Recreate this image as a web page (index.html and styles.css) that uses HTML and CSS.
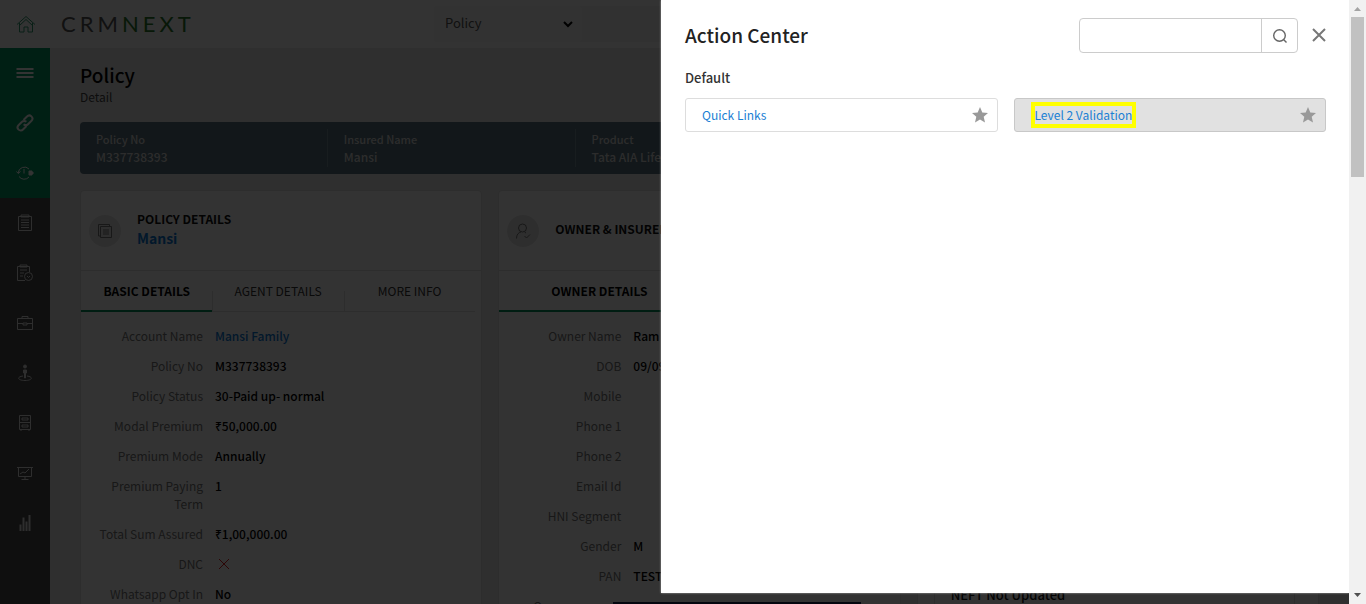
FILE: index.html
```html
<!DOCTYPE html>
<html lang="en">
<head>
<meta charset="utf-8">
<title>Policy Detail</title>
<link rel="stylesheet" href="styles.css">
</head>
<body>
<div class="window">
  <div class="app">
    <header class="topbar">
      <a class="home" href="#" aria-label="Home">
        <svg width="20" height="18" viewBox="0 0 20 18"><path d="M1 9.500 10 1.500l9 8M3.500 8v9h4.500v-5h4v5h4.500V8M3.500 10.500 10 4.500l6.500 6"/></svg>
      </a>
      <div class="logo">CRM<span class="logo-next">NEXT</span></div>
      <div class="search-bar">
        <select class="module" aria-label="Module"><option>Policy</option></select>
        <svg class="chevron" width="10" height="7" viewBox="0 0 10 7"><path d="m1 1 4 4 4-4"/></svg>
      </div>
    </header>
    <div class="body">
      <nav class="sidebar">
        <div class="side-main">
          <a href="#" aria-label="Menu"><svg class="menu-icon" width="18" height="18" viewBox="0 0 18 18"><path d="M.5 5h17M.5 9h17M.5 13h17"/></svg></a>
          <a href="#" aria-label="Links"><svg class="link-icon" width="18" height="18" viewBox="0 0 18 18"><path d="m7.500 6 3.500-3.500a3 3 0 0 1 4.500 4.300L12 10.200a3 3 0 0 1-4.300 0M10.500 12 7 15.500a3 3 0 0 1-4.500-4.300L6 7.800a3 3 0 0 1 4.300 0"/></svg></a>
          <a href="#" aria-label="Recent"><svg width="18" height="18" viewBox="0 0 18 18"><path d="M13 5A6.300 6.300 0 0 0 2.200 9M3 12.500a6.300 6.300 0 0 0 10 .5M.5 7.500 2.200 9.500 4.500 7.500M8 5v4.500"/><path class="solid" d="M13 7h3v4h-3zM16.500 8h.5v2h-.5z"/></svg></a>
        </div>
        <a href="#" aria-label="Tasks"><svg width="18" height="18" viewBox="0 0 18 18"><path d="M2.500 2.500h13v14h-13zM5 1h8v2H5zM5 6h8M5 8.500h8M5 11h8M5 13.500h8"/></svg></a>
        <a href="#" aria-label="Scheduled"><svg width="18" height="18" viewBox="0 0 18 18"><path d="M9 16.500H1.500v-14h12V8M4 1h7v2H4zM4 6h7M4 9h4M4 12h3"/><circle cx="12.500" cy="12.500" r="4"/><path d="m11 12 1.500 1.500L14 12"/></svg></a>
        <a href="#" aria-label="Business"><svg width="18" height="18" viewBox="0 0 18 18"><path d="M1.500 4.500h15v11h-15zM6 4V2.500h6V4M2 9.500h5M11 9.500h5M7 9h4v2H7z"/></svg></a>
        <a href="#" aria-label="Location"><svg width="18" height="18" viewBox="0 0 18 18"><circle class="solid" cx="9" cy="2.500" r="1.500"/><path class="solid" d="M7.500 6h3v3h-1v5h-1V9h-1z"/><path d="M7 12c-7 1-5 4.500 2 4.500s9-3.500 2-4.500"/></svg></a>
        <a href="#" aria-label="Records"><svg width="18" height="18" viewBox="0 0 18 18"><path d="M3.500 1.500h11v14h-11zM4 8.500h10M6 4h6v2H6zM6 11h6v2H6zM5 15.500v1.500M13 15.500v1.500"/></svg></a>
        <a href="#" aria-label="Presentations"><svg width="18" height="18" viewBox="0 0 18 18"><path d="M1 3.500h16M2.500 4v8.500h13V4M4 10l3-2 2 1 4-4M9 13v2M5.500 15.500h7"/></svg></a>
        <a href="#" aria-label="Reports"><svg class="bars-icon" width="18" height="18" viewBox="0 0 18 18"><path d="M4.500 17v-6.500M7.500 17V3.500M10.500 17V7.500M13.500 17V1"/></svg></a>
      </nav>
      <main class="content">
        <h1 class="page-title">Policy</h1>
        <p class="page-sub">Detail</p>
        <section class="summary">
          <div class="fact"><span class="fact-label">Policy No</span><span>M337738393</span></div>
          <div class="fact"><span class="fact-label">Insured Name</span><span>Mansi</span></div>
          <div class="fact"><span class="fact-label">Product</span><span>Tata AIA Life Insurance</span></div>
          <div class="fact"></div>
          <div class="fact"></div>
        </section>
        <div class="cards">
          <section class="card">
            <div class="card-head">
              <span class="badge"><svg width="16" height="16" viewBox="0 0 16 16"><path d="M3.500 13H1.500V1.500h11v2M3.500 3.500h11v11h-11zM6 7h6M6 9h6M6 11h6"/></svg></span>
              <div class="card-names"><h2 class="card-title">POLICY DETAILS</h2><a class="card-link" href="#">Mansi</a></div>
            </div>
            <div class="tabs">
              <button class="tab active">BASIC DETAILS</button>
              <button class="tab">AGENT DETAILS</button>
              <button class="tab">MORE INFO</button>
            </div>
            <dl class="fields">
              <dt>Account Name</dt><dd><a href="#">Mansi Family</a></dd>
              <dt>Policy No</dt><dd>M337738393</dd>
              <dt>Policy Status</dt><dd>30-Paid up- normal</dd>
              <dt>Modal Premium</dt><dd>₹50,000.00</dd>
              <dt>Premium Mode</dt><dd>Annually</dd>
              <dt>Premium Paying Term</dt><dd>1</dd>
              <dt>Total Sum Assured</dt><dd>₹1,00,000.00</dd>
              <dt>DNC</dt><dd><svg class="cross" width="18" height="18" viewBox="0 0 18 18"><path d="m4 4 10 10M14 4 4 14"/></svg></dd>
              <dt>Whatsapp Opt In</dt><dd>No</dd>
            </dl>
          </section>
          <section class="card">
            <div class="card-head">
              <span class="badge"><svg width="16" height="16" viewBox="0 0 16 16"><circle cx="7.500" cy="5" r="4"/><path d="M1.500 15.500c0-4 2-6 4.500-6.500M9.500 9l1.500 1M9.500 13l2 2 3.500-3.500"/></svg></span>
              <div class="card-names"><h2 class="card-title">OWNER &amp; INSURED</h2></div>
            </div>
            <div class="tabs two">
              <button class="tab active">OWNER DETAILS</button>
              <button class="tab">INSURED DETAILS</button>
            </div>
            <dl class="fields">
              <dt>Owner Name</dt><dd>Ram</dd>
              <dt>DOB</dt><dd>09/09/1980</dd>
              <dt>Mobile</dt><dd></dd>
              <dt>Phone 1</dt><dd></dd>
              <dt>Phone 2</dt><dd></dd>
              <dt>Email Id</dt><dd></dd>
              <dt>HNI Segment</dt><dd></dd>
              <dt>Gender</dt><dd>M</dd>
              <dt>PAN</dt><dd>TEST</dd>
              <dt class="group">Owner</dt><dd></dd>
            </dl>
          </section>
          <section class="card alerts">
            <div class="alert">NEFT Not Updated</div>
          </section>
        </div>
      </main>
    </div>
    <div class="overlay"></div>
    <div class="status-strip"></div>
    <aside class="panel">
      <div class="panel-head">
        <h2 class="panel-title">Action Center</h2>
        <form class="finder">
          <input type="text" aria-label="Search actions">
          <button type="button" aria-label="Search"><svg width="16" height="16" viewBox="0 0 16 16"><circle cx="7.500" cy="7.500" r="5.800"/><path d="m11.500 11.500 3 3"/></svg></button>
        </form>
        <button class="close" aria-label="Close"><svg width="14" height="14" viewBox="0 0 14 14"><path d="m1 1 12 12M13 1 1 13"/></svg></button>
      </div>
      <h3 class="group-title">Default</h3>
      <div class="actions">
        <div class="action"><a href="#">Quick Links</a><button class="star" aria-label="Favourite Quick Links"><svg width="16" height="16" viewBox="0 0 16 16"><path d="m8 0 2.300 5.400 5.700.5-4.300 3.800L13 15.500l-5-3-5 3 1.300-5.800L0 5.900l5.700-.5z"/></svg></button></div>
        <div class="action hovered"><a class="marked" href="#">Level 2 Validation</a><button class="star" aria-label="Favourite Level 2 Validation"><svg width="16" height="16" viewBox="0 0 16 16"><path d="m8 0 2.300 5.400 5.700.5-4.300 3.800L13 15.500l-5-3-5 3 1.300-5.800L0 5.900l5.700-.5z"/></svg></button></div>
      </div>
    </aside>
  </div>
  <div class="scrollbar">
    <svg class="arrow-up" width="17" height="17" viewBox="0 0 17 17"><path d="M5 11h7L8.500 7z"/></svg>
    <div class="track"><div class="thumb"></div></div>
    <svg class="arrow-down" width="17" height="17" viewBox="0 0 17 17"><path d="M5 6h7l-3.500 4z"/></svg>
  </div>
</div>
</body>
</html>
```

FILE: styles.css
```css
* { box-sizing: border-box; }
body {
  margin: 0;
  font-family: "Noto Sans CJK SC", "Noto Sans", sans-serif;
  font-size: 12px;
  line-height: 18px;
  color: #111;
}
h1, h2, h3, p, dl, dd { margin: 0; }
a { color: #0a78d6; text-decoration: none; }
button { font: inherit; border: 0; background: none; padding: 0; }
svg { display: block; fill: none; stroke: currentColor; }

.window { display: flex; height: 100vh; overflow: hidden; }
.app { position: relative; flex: 1; min-width: 0; display: flex; flex-direction: column; overflow: hidden; background: #ebebeb; }

.topbar { flex: none; display: flex; align-items: center; height: 48px; background: #fff; }
.home { width: 52px; display: flex; justify-content: center; color: #2f9c70; }
.logo { width: 382px; padding-left: 9px; font-family: Lato, sans-serif; font-size: 22px; line-height: 32px; letter-spacing: 4px; color: #555; }
.logo-next { color: #2b7a2b; }
.search-bar { position: relative; flex: 1; height: 36px; background: #f5f5f5; border-radius: 4px; }
.module { appearance: none; width: 148px; height: 36px; padding: 0 11px 2px; border: 0; border-radius: 4px; background: #f9f9f9; font: inherit; font-size: 13px; color: #555; }
.chevron { position: absolute; left: 129px; top: 15px; color: #000; stroke-width: 2; }

.body { flex: 1; min-height: 0; display: flex; }
.sidebar { flex: none; width: 50px; background: #4b4b4b; }
.side-main { background: #009b66; }
.sidebar a { display: flex; align-items: center; justify-content: center; height: 50px; color: #e4e4e4; }
.side-main a { color: #fff; }
.menu-icon, .link-icon, .bars-icon { stroke-width: 2; }
.solid { fill: currentColor; }

.content { flex: 1; min-width: 0; padding: 13px 30px 0; }
.page-title { font-size: 19px; line-height: 28px; font-weight: 500; color: #000; }
.page-sub { font-size: 12px; line-height: 16px; color: #444; }
.summary { display: grid; grid-template-columns: repeat(5, 1fr); height: 52px; margin-top: 17px; padding: 7px 0; background: #5a7480; border-radius: 4px; }
.fact { display: flex; flex-direction: column; justify-content: center; padding-left: 16px; border-right: 1px solid #7b919b; color: #ddd; font-weight: 500; white-space: nowrap; overflow: hidden; }
.fact:last-child { border-right: 0; }
.fact-label { font-size: 11px; }

.cards { display: grid; grid-template-columns: repeat(3, 1fr); gap: 16px; margin-top: 16px; }
.card { min-width: 0; height: 600px; background: #fff; border: 1px solid #dedede; border-radius: 4px; }
.card-head { display: flex; align-items: center; gap: 16px; height: 80px; padding-left: 8px; border-bottom: 1px solid #dedede; }
.badge { display: flex; align-items: center; justify-content: center; width: 32px; height: 32px; border-radius: 50%; background: #e6e6e6; color: #777; }
.card-names { padding-bottom: 4px; }
.card-title { font-size: 12px; line-height: 18px; font-weight: 700; color: #111; white-space: nowrap; }
.card-link { display: block; font-size: 14px; line-height: 20px; font-weight: 700; }
.tabs { display: grid; grid-template-columns: repeat(3, 1fr); height: 41px; margin-right: 6px; border-bottom: 1px solid #dedede; }
.tabs.two { grid-template-columns: repeat(2, 1fr); margin-right: 0; }
.tab { position: relative; height: 41px; padding-bottom: 2px; color: #333; white-space: nowrap; }
.tab + .tab::before { content: ""; position: absolute; left: 0; top: 20px; bottom: 0; border-left: 1px solid #dedede; }
.tab.active { padding-bottom: 0; font-weight: 700; color: #000; border-bottom: 2px solid #008f5d; }
.tabs.two .tab.active { padding-left: 0; }
.fields { display: grid; grid-template-columns: 110px 1fr; column-gap: 12px; row-gap: 12px; padding: 15px 0 0 12px; }
.fields dt { text-align: right; color: #777; }
.fields dd { font-weight: 500; color: #000; }
.fields .group { padding-right: 51px; }
.cross { color: #d22; }
.alerts { padding: 372px 23px 0 16px; }
.alert { height: 120px; padding: 22px 16px; border: 1px solid #dedede; font-size: 13px; font-weight: 500; }

.overlay { position: absolute; inset: 0; background: rgba(0, 0, 0, 0.8); }
.status-strip { position: absolute; left: 613px; width: 248px; bottom: 0; height: 2px; background: #04060f; }
.panel { position: absolute; top: 0; right: 0; bottom: 11px; width: 51%; padding: 18px 23px 0 24px; background: #fff; box-shadow: 0 0 2px #aaa; }
.panel-head { display: flex; align-items: center; height: 35px; }
.panel-title { flex: 1; padding-bottom: 2px; font-size: 19px; line-height: 28px; font-weight: 500; color: #222; }
.finder { display: flex; width: 219px; height: 35px; border: 1px solid #ccc; border-radius: 4px; }
.finder input { flex: 1; min-width: 0; border: 0; background: none; }
.finder button { width: 36px; display: flex; align-items: center; justify-content: center; border-left: 1px solid #ccc; color: #666; }
.finder svg { stroke-width: 1.4; }
.close { width: 14px; margin: 0 0 2px 14px; color: #777; stroke-width: 2; }
.group-title { margin: 16px 0 11px; font-size: 13px; line-height: 18px; font-weight: 500; color: #333; }
.actions { display: grid; grid-template-columns: 1fr 1fr; gap: 16px; }
.action { display: flex; align-items: center; justify-content: space-between; height: 34px; padding: 0 9px 0 16px; border: 1px solid #ddd; border-radius: 3px; }
.action a { color: #1a80d4; }
.hovered { background: #e1e1e1; border-color: #c8c8c8; }
.action .marked { border: 4px solid #ff0; }
.star { color: #999; }
.star svg { fill: currentColor; stroke: none; }

.scrollbar { flex: none; display: flex; flex-direction: column; width: 17px; background: #f1f1f1; }
.arrow-up { fill: #a3a3a3; stroke: none; }
.arrow-down { fill: #505050; stroke: none; }
.track { flex: 1; padding: 0 2px; }
.thumb { height: 28%; background: #c1c1c1; }
```
